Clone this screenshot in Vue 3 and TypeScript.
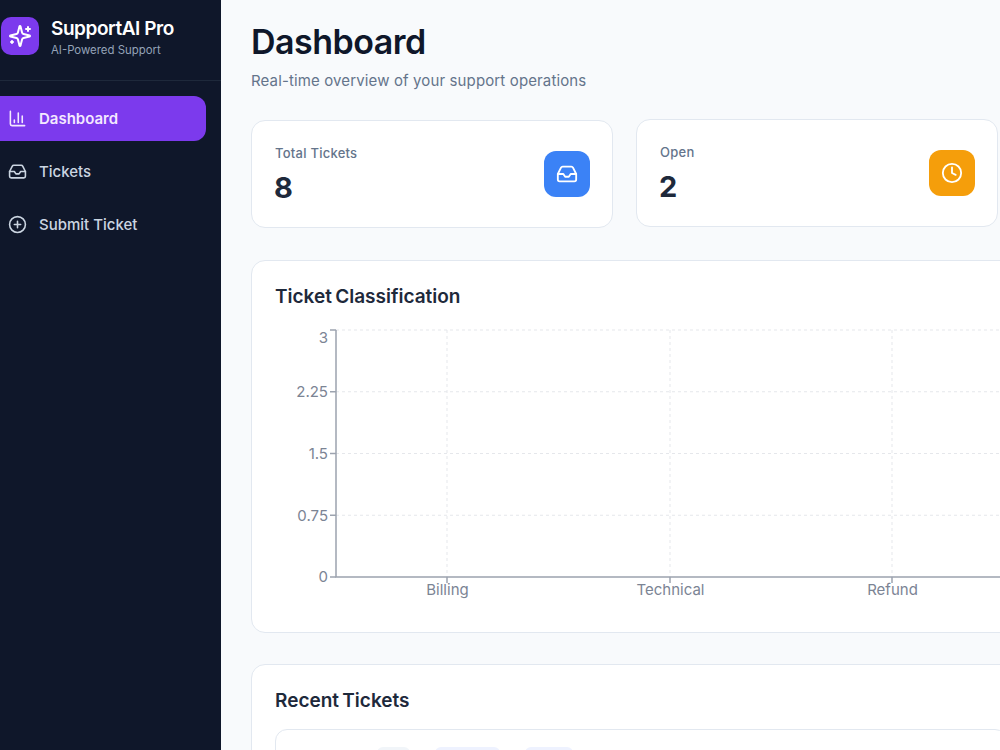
<script setup lang="ts">
const navItems = [
  { label: "Dashboard", icon: "chart", active: true },
  { label: "Tickets", icon: "inbox", active: false },
  { label: "Submit Ticket", icon: "plus", active: false },
];

const stats = [
  { label: "Total Tickets", value: 8, icon: "inbox", tone: "blue" },
  { label: "Open", value: 2, icon: "clock", tone: "amber" },
];

// textY: the top label sits below its tick so it is not clipped
const yTicks = [
  { label: "3", y: 0, textY: 13 },
  { label: "2.25", y: 61.75, textY: 67 },
  { label: "1.5", y: 123.5, textY: 129 },
  { label: "0.75", y: 185.25, textY: 191 },
  { label: "0", y: 247, textY: 252 },
];
const xTicks = [
  { label: "Billing", x: 111 },
  { label: "Technical", x: 334 },
  { label: "Refund", x: 556 },
];
</script>

<template>
  <div class="layout">
    <aside class="sidebar">
      <div class="brand">
        <div class="brand-mark">
          <svg viewBox="0 0 24 24" width="24" height="24" fill="none" stroke="#fff" stroke-width="2" stroke-linecap="round" stroke-linejoin="round">
            <path d="M9.94 15.5a2 2 0 0 0-1.44-1.44l-6.13-1.58a.5.5 0 0 1 0-.96L8.5 9.94A2 2 0 0 0 9.94 8.5l1.58-6.13a.5.5 0 0 1 .96 0L14.06 8.5a2 2 0 0 0 1.44 1.44l6.13 1.58a.5.5 0 0 1 0 .96L15.5 14.06a2 2 0 0 0-1.44 1.44l-1.58 6.13a.5.5 0 0 1-.96 0z" />
            <path d="M20 3v4M22 5h-4M4 17v2M5 18H3" />
          </svg>
        </div>
        <div class="brand-text">
          <div class="brand-name">SupportAI Pro</div>
          <div class="brand-sub">AI-Powered Support</div>
        </div>
      </div>
      <nav class="nav">
        <a v-for="item in navItems" :key="item.label" class="nav-item" :class="{ active: item.active }">
          <svg viewBox="0 0 24 24" width="20" height="20" fill="none" stroke="currentColor" stroke-width="2" stroke-linecap="round" stroke-linejoin="round">
            <template v-if="item.icon === 'chart'">
              <path d="M3 3v16a2 2 0 0 0 2 2h16" />
              <path d="M8 17v-3M13 17V5M18 17V9" />
            </template>
            <template v-else-if="item.icon === 'inbox'">
              <path d="M22 12h-6l-2 3h-4l-2-3H2" />
              <path d="M5.45 5.11 2 12v6a2 2 0 0 0 2 2h16a2 2 0 0 0 2-2v-6l-3.45-6.89A2 2 0 0 0 16.76 4H7.24a2 2 0 0 0-1.79 1.11z" />
            </template>
            <template v-else>
              <circle cx="12" cy="12" r="10" />
              <path d="M8 12h8M12 8v8" />
            </template>
          </svg>
          <span>{{ item.label }}</span>
        </a>
      </nav>
    </aside>

    <main class="main">
      <h1 class="title">Dashboard</h1>
      <p class="subtitle">Real-time overview of your support operations</p>

      <div class="stats">
        <div v-for="stat in stats" :key="stat.label" class="stat-card">
          <div class="stat-text">
            <div class="stat-label">{{ stat.label }}</div>
            <div class="stat-value">{{ stat.value }}</div>
          </div>
          <div class="stat-icon" :class="stat.tone">
            <svg viewBox="0 0 24 24" width="22" height="22" fill="none" stroke="#fff" stroke-width="2" stroke-linecap="round" stroke-linejoin="round">
              <template v-if="stat.icon === 'inbox'">
                <path d="M22 12h-6l-2 3h-4l-2-3H2" />
                <path d="M5.45 5.11 2 12v6a2 2 0 0 0 2 2h16a2 2 0 0 0 2-2v-6l-3.45-6.89A2 2 0 0 0 16.76 4H7.24a2 2 0 0 0-1.79 1.11z" />
              </template>
              <template v-else>
                <circle cx="12" cy="12" r="10" />
                <path d="M12 6v6l4 2" />
              </template>
            </svg>
          </div>
        </div>
      </div>

      <section class="panel chart-panel">
        <h2 class="panel-title">Ticket Classification</h2>
        <svg class="chart" width="760" height="280" viewBox="-61 -5 760 280">
          <g stroke="#e5e7eb" stroke-dasharray="3 3" fill="none">
            <line v-for="t in yTicks.slice(0, 4)" :key="t.label" x1="0" :y1="t.y" x2="700" :y2="t.y" />
            <line v-for="t in xTicks" :key="t.label" :x1="t.x" y1="0" :x2="t.x" y2="247" />
          </g>
          <g stroke="#9ca3af" stroke-width="1.5" fill="none">
            <path d="M0 0V247H700" />
            <line v-for="t in yTicks" :key="t.label" x1="-6" :y1="t.y" x2="0" :y2="t.y" />
            <line v-for="t in xTicks" :key="t.label" :x1="t.x" y1="247" :x2="t.x" y2="253" />
          </g>
          <g class="tick-text">
            <text v-for="t in yTicks" :key="t.label" x="-8" :y="t.textY" text-anchor="end">{{ t.label }}</text>
            <text v-for="t in xTicks" :key="t.label" :x="t.x + 0.5" y="265" text-anchor="middle">{{ t.label }}</text>
          </g>
        </svg>
      </section>

      <section class="panel recent-panel">
        <h2 class="panel-title">Recent Tickets</h2>
        <div class="table-box">
          <span class="chip chip-a"></span>
          <span class="chip chip-b"></span>
          <span class="chip chip-c"></span>
        </div>
      </section>
    </main>
  </div>
</template>

<style scoped>
.layout {
  display: flex;
  width: 1000px;
  height: 750px;
  overflow: hidden;
  background: #f8fafc;
  font-family: Inter, "Liberation Sans", sans-serif;
}

.sidebar {
  flex: 0 0 221px;
  background: #0f172a;
  color: #fff;
}

.brand {
  display: flex;
  align-items: center;
  gap: 12px;
  height: 72px;
  padding: 0 0 8px 1px;
  border-bottom: 1px solid #1e293b;
  box-sizing: content-box;
}

.brand-mark {
  width: 38px;
  height: 38px;
  border-radius: 10px;
  background: #7c3aed;
  display: flex;
  align-items: center;
  justify-content: center;
}

.brand-text {
  padding-top: 2px;
}

.brand-name {
  font-size: 19px;
  font-weight: 600;
  line-height: 24px;
  letter-spacing: -0.45px;
}

.brand-sub {
  margin-top: 1px;
  font-size: 11.4px;
  line-height: 16px;
  color: #94a3b8;
}

.nav {
  display: flex;
  flex-direction: column;
  gap: 8px;
  padding-top: 15px;
  margin-left: -15px;
  width: 221px;
}

.nav-item {
  display: flex;
  align-items: center;
  gap: 12px;
  height: 45px;
  padding-left: 23px;
  border-radius: 12px;
  color: #cbd5e1;
  font-size: 15px;
  font-weight: 500;
}

.nav-item.active {
  background: #7c3aed;
  color: #f3e8ff;
  font-weight: 600;
}

.nav-item svg {
  width: 19px;
  height: 19px;
}

.main {
  flex: 1;
  min-width: 0;
  padding: 22px 0 0 30px;
}

.title {
  margin: 0;
  font-size: 34px;
  font-weight: 600;
  line-height: 40px;
  letter-spacing: -0.5px;
  color: #0f172a;
}

.subtitle {
  margin: 9px 0 0;
  font-size: 15px;
  line-height: 20px;
  letter-spacing: 0.13px;
  color: #64748b;
}

.stats {
  display: flex;
  align-items: flex-start;
  gap: 23px;
  margin-top: 29px;
  width: 747px;
}

.stat-card {
  flex: 1;
  height: 108px;
  box-sizing: border-box;
  display: flex;
  align-items: center;
  justify-content: space-between;
  padding: 0 22px 0 23px;
  background: #fff;
  border: 1px solid #e2e8f0;
  border-radius: 14px;
}

/* second card sits a pixel higher in the reference */
.stat-card + .stat-card {
  margin-top: -1px;
}

.stat-text {
  padding-top: 2px;
}

.stat-label {
  font-size: 13px;
  font-weight: 500;
  line-height: 18px;
  letter-spacing: 0.25px;
  color: #64748b;
}

.stat-value {
  margin-top: 8px;
  margin-left: -1px;
  font-size: 29px;
  font-weight: 700;
  line-height: 36px;
  color: #1e293b;
}

.stat-icon {
  width: 46px;
  height: 46px;
  border-radius: 12px;
  display: flex;
  align-items: center;
  justify-content: center;
}

.stat-icon.blue {
  background: #3b82f6;
}

.stat-icon.amber {
  background: #f59e0b;
}

.panel {
  width: 780px;
  box-sizing: border-box;
  background: #fff;
  border: 1px solid #e2e8f0;
  border-radius: 14px;
  padding: 23px;
}

.chart-panel {
  height: 373px;
  margin-top: 32px;
}

.recent-panel {
  margin-top: 31px;
}

.panel-title {
  margin: 0;
  font-size: 19px;
  font-weight: 600;
  line-height: 26px;
  word-spacing: -1.5px;
  color: #1e293b;
}

.chart {
  display: block;
  margin-top: 15px;
}

.tick-text {
  font-size: 15px;
  fill: #7b8494;
}

.table-box {
  display: flex;
  gap: 25px;
  height: 120px;
  box-sizing: border-box;
  margin-top: 15px;
  padding: 17px 0 0 101px;
  border: 1px solid #e2e8f0;
  border-radius: 12px;
}

.chip {
  height: 24px;
  border-radius: 6px;
}

.chip-a {
  width: 33px;
  background: #f1f5f9;
}

.chip-b {
  width: 65px;
  background: #eef2ff;
}

.chip-c {
  width: 48px;
  background: #eef2ff;
}
</style>
